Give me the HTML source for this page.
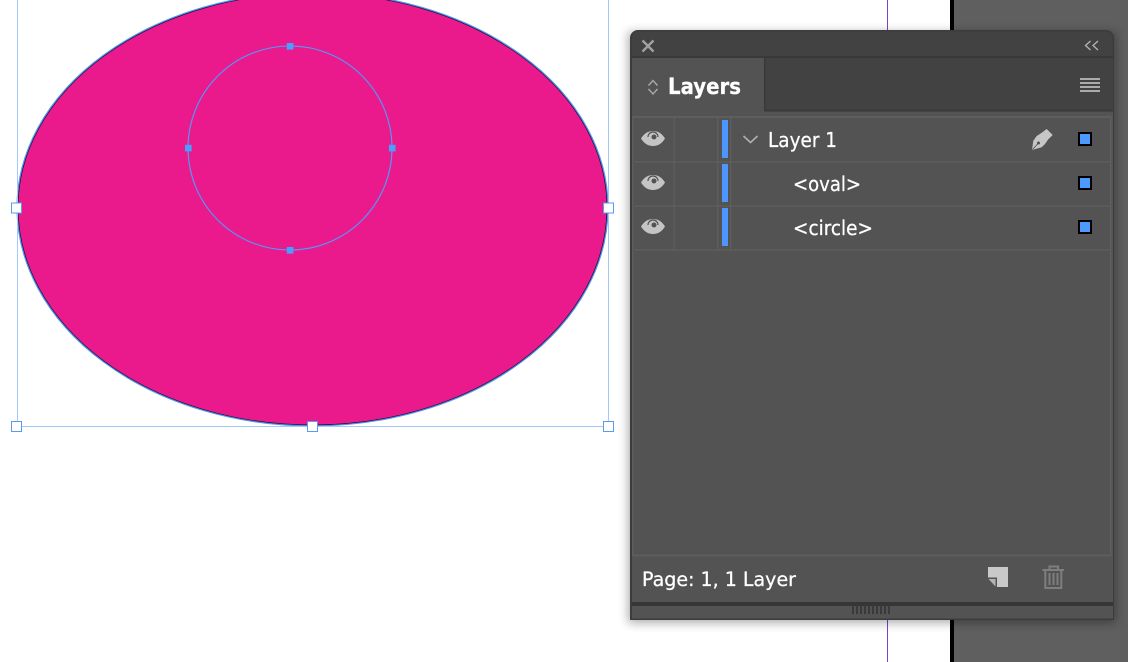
<!DOCTYPE html>
<html>
<head>
<meta charset="utf-8">
<style>
html,body{margin:0;padding:0;background:#fff;width:1128px;height:662px;overflow:hidden}
svg{display:block}
text{font-family:"DejaVu Sans","Liberation Sans",sans-serif;fill:#fff;stroke:#fff;stroke-width:0.25px}
</style>
</head>
<body>
<svg width="1128" height="662" viewBox="0 0 1128 662" xmlns="http://www.w3.org/2000/svg">
<defs>
<filter id="sh" x="-10%" y="-10%" width="120%" height="120%"><feGaussianBlur stdDeviation="5"/></filter>
</defs>
<rect width="1128" height="662" fill="#fff"/>
<!-- pasteboard -->
<rect x="954" y="0" width="174" height="662" fill="#5f5f5f"/>
<rect x="950" y="0" width="4" height="662" fill="#000"/>
<rect x="887" y="0" width="1" height="662" fill="#7a45c8"/>
<!-- oval -->
<path d="M17 207.500A295.500 215.500 0 0 1 608 207.500A295.500 218.500 0 0 1 17 207.500z" fill="#eb1a8c"/>
<path d="M18 207.500A294.500 214.500 0 0 1 607 207.500A294.500 217.500 0 0 1 18 207.500z" fill="none" stroke="#14183c" stroke-width="0.800"/>
<path d="M17 207.500A295.500 215.500 0 0 1 608 207.500A295.500 218.500 0 0 1 17 207.500z" fill="none" stroke="#4a96f0" stroke-width="1.200"/>
<!-- bbox -->
<rect x="17.500" y="-5" width="591" height="431.500" fill="none" stroke="#a3c6fb" stroke-width="1"/>
<!-- circle -->
<circle cx="290" cy="148" r="102" fill="none" stroke="#4a9eff" stroke-width="1.100"/>
<g fill="#4a9eff">
<rect x="286.800" y="43" width="6.600" height="6.600"/>
<rect x="286.800" y="247" width="6.600" height="6.600"/>
<rect x="185" y="144.800" width="6.600" height="6.600"/>
<rect x="389" y="144.800" width="6.600" height="6.600"/>
</g>
<!-- handles -->
<g fill="#fff" stroke="#5a9bf0" stroke-width="1">
<rect x="11.500" y="203" width="10" height="10"/>
<rect x="603.500" y="203" width="10" height="10"/>
<rect x="11.500" y="421.500" width="10" height="10"/>
<rect x="307.500" y="421.500" width="10" height="10"/>
<rect x="603.500" y="421.500" width="10" height="10"/>
</g>
<!-- panel shadow -->
<rect x="628" y="32" width="488" height="591" fill="#000" opacity="0.32" filter="url(#sh)"/>
<!-- panel -->
<path d="M638 30H1106a8 8 0 0 1 8 8V620H630V38a8 8 0 0 1 8-8z" fill="#3c3c3c"/>
<path d="M638 31.500H1106a6.500 6.500 0 0 1 6.500 6.500V56H632V38a6 6 0 0 1 6-6.500z" fill="#424242"/>
<rect x="632" y="56" width="481" height="2" fill="#393939"/>
<rect x="632" y="58" width="481" height="53" fill="#424242"/>
<rect x="765" y="109.500" width="348" height="2" fill="#393939"/>
<rect x="764" y="58" width="1.500" height="53" fill="#393939"/>
<rect x="632" y="58" width="132" height="54" fill="#535353"/>
<rect x="632" y="111.500" width="481" height="490.500" fill="#535353"/>
<rect x="632" y="606" width="481" height="12.500" fill="#535353"/>
<rect x="632" y="602" width="481" height="4" fill="#363636"/>
<!-- list borders -->
<g fill="#5e5e5e">
<rect x="632" y="116" width="479" height="2"/>
<rect x="634" y="161.300" width="476" height="1.400"/>
<rect x="634" y="205.300" width="476" height="1.400"/>
<rect x="634" y="249.300" width="476" height="1.400"/>
<rect x="632" y="554.500" width="479" height="1.800"/>
<rect x="1110" y="116" width="1.500" height="440"/>
<rect x="632" y="116" width="1.500" height="440"/>
<rect x="673.500" y="118" width="1.400" height="132"/>
<rect x="717" y="118" width="1.400" height="132"/>
<rect x="730" y="118" width="1.400" height="132"/>
</g>
<!-- close -->
<path d="M642.500 40.500l11 11M653.500 40.500l-11 11" stroke="#a2a2a2" stroke-width="2.300" fill="none"/>
<!-- collapse -->
<path d="M1090.500 41l-5 4.500 5 4.500M1098 41l-5 4.500 5 4.500" stroke="#b5b5b5" stroke-width="1.300" fill="none"/>
<!-- tab stepper -->
<path d="M648.500 85.500l4.500-5 4.500 5M648.500 89l4.500 5 4.500-5" stroke="#aaa" stroke-width="1.400" fill="none"/>
<text x="668" y="94" font-size="22" font-weight="700" textLength="73" lengthAdjust="spacingAndGlyphs">Layers</text>
<!-- menu -->
<g fill="#ababab">
<rect x="1080" y="78" width="20" height="2"/>
<rect x="1080" y="82" width="20" height="2"/>
<rect x="1080" y="86" width="20" height="2"/>
<rect x="1080" y="90" width="20" height="2"/>
</g>
<!-- rows -->
<g fill="#4d96ff">
<rect x="722" y="120" width="6" height="38"/>
<rect x="722" y="164" width="6" height="38"/>
<rect x="722" y="208" width="6" height="38"/>
</g>
<g>
<g transform="translate(653,138.500)">
<path d="M-12 0C-9-5-5-7.500 0-7.500S9-5 12 0C9 5 5 7.500 0 7.500S-9 5-12 0z" fill="#c4c4c4"/>
<path d="M-5-1.500A5 5 0 0 1 5-1.500" stroke="#535353" stroke-width="1.200" fill="none"/>
<circle cx="1" cy="-1.500" r="2.500" fill="#535353"/>
</g>
<g transform="translate(653,182.500)">
<path d="M-12 0C-9-5-5-7.500 0-7.500S9-5 12 0C9 5 5 7.500 0 7.500S-9 5-12 0z" fill="#c4c4c4"/>
<path d="M-5-1.500A5 5 0 0 1 5-1.500" stroke="#535353" stroke-width="1.200" fill="none"/>
<circle cx="1" cy="-1.500" r="2.500" fill="#535353"/>
</g>
<g transform="translate(653,226.500)">
<path d="M-12 0C-9-5-5-7.500 0-7.500S9-5 12 0C9 5 5 7.500 0 7.500S-9 5-12 0z" fill="#c4c4c4"/>
<path d="M-5-1.500A5 5 0 0 1 5-1.500" stroke="#535353" stroke-width="1.200" fill="none"/>
<circle cx="1" cy="-1.500" r="2.500" fill="#535353"/>
</g>
</g>
<!-- chevron -->
<path d="M743.500 136l7 6.500 7-6.500" stroke="#b0b0b0" stroke-width="1.600" fill="none"/>
<text x="768" y="147" font-size="20" textLength="69" lengthAdjust="spacingAndGlyphs">Layer 1</text>
<text x="793" y="191" font-size="20" textLength="68" lengthAdjust="spacingAndGlyphs">&lt;oval&gt;</text>
<text x="793" y="235" font-size="20" textLength="80" lengthAdjust="spacingAndGlyphs">&lt;circle&gt;</text>
<!-- pen icon -->
<path d="M1046.700 129L1052.700 135L1048.300 139.300L1045 144L1041.700 147.300L1032 150L1033.300 140.700L1036.700 136L1041.700 132.700z" fill="#c6c6c6"/>
<circle cx="1038.500" cy="143" r="1.500" fill="#535353"/>
<path d="M1032.500 149.500L1038 143.500" stroke="#535353" stroke-width="0.900" fill="none"/>
<!-- target squares -->
<g fill="#4d9aff" stroke="#000" stroke-width="2">
<rect x="1079" y="133" width="12" height="12"/>
<rect x="1079" y="177" width="12" height="12"/>
<rect x="1079" y="221" width="12" height="12"/>
</g>
<!-- footer -->
<text x="642" y="586" font-size="19.500" textLength="154" lengthAdjust="spacingAndGlyphs">Page: 1, 1 Layer</text>
<path d="M988 567H1008V587H997V577.500H988z" fill="#c9c9c9"/>
<path d="M988.500 579H995.500V586.500z" fill="#b4b4b4"/>
<g fill="none" stroke="#7e7e7e" stroke-width="2">
<path d="M1042.500 570H1064"/>
<path d="M1049.500 570V566.500H1058V570"/>
<path d="M1045.300 570V588H1061.300V570"/>
</g>
<path d="M1049.500 573V585M1053.500 573V585M1057.500 573V585" stroke="#7e7e7e" stroke-width="2" fill="none"/>
<!-- grip -->
<path d="M853 606v8M857 606v8M861 606v8M865 606v8M869 606v8M873 606v8M877 606v8M881 606v8M885 606v8M889 606v8" stroke="#3a3a3a" stroke-width="2" fill="none"/>
</svg>
</body>
</html>
